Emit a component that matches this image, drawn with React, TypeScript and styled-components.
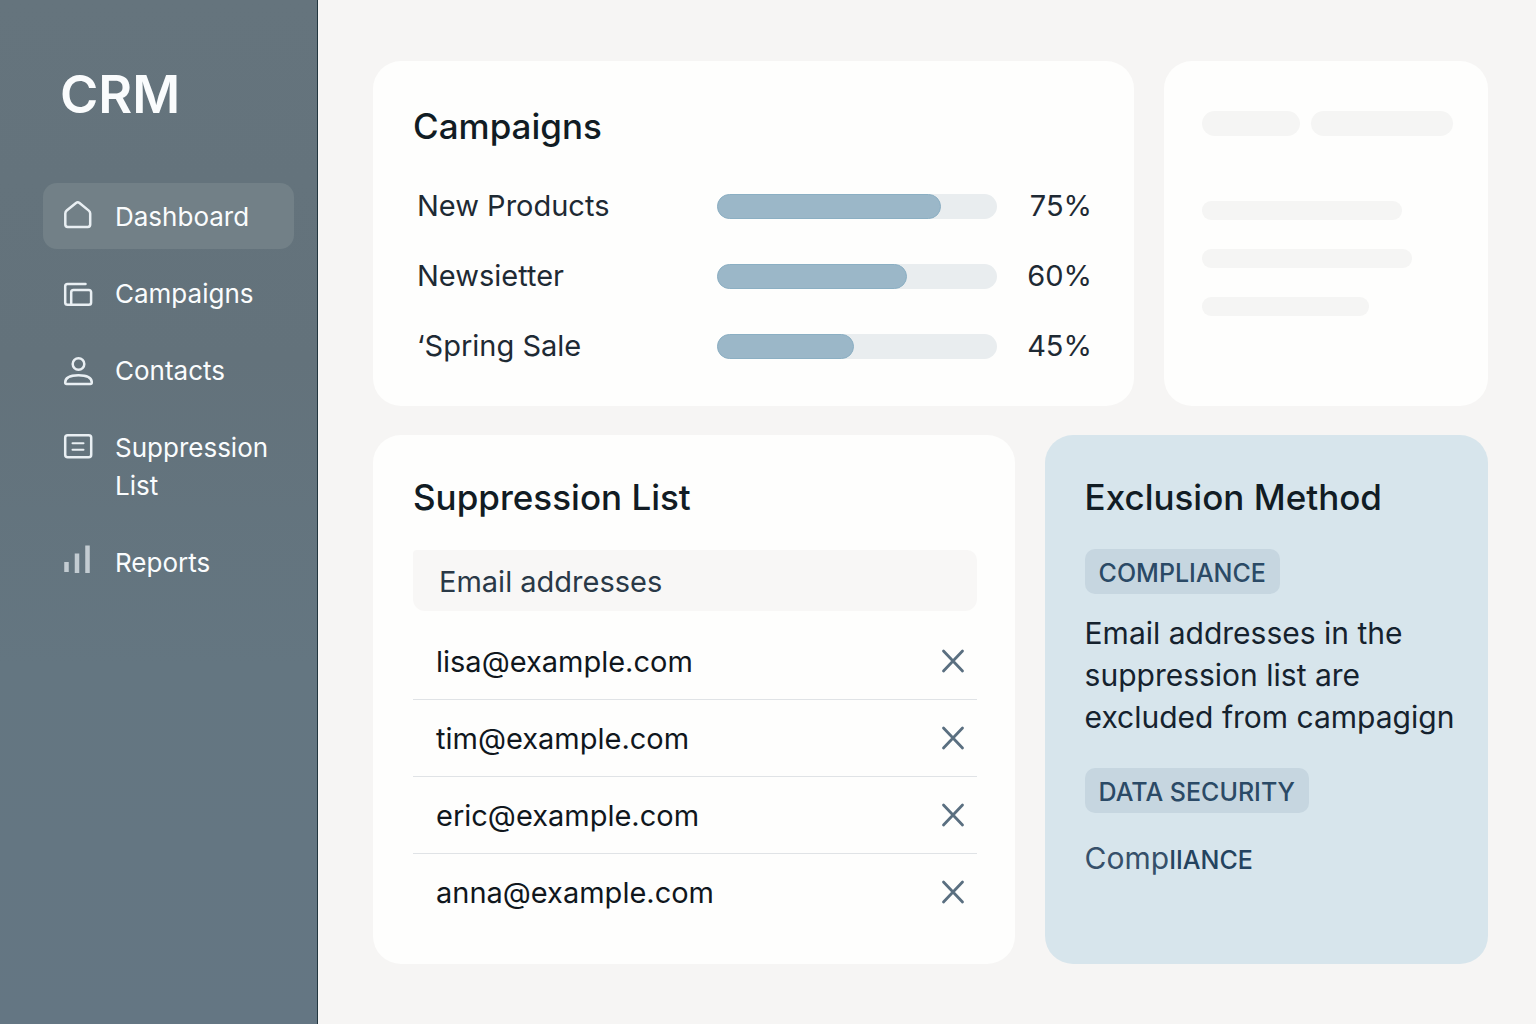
import React from "react";
import styled, { createGlobalStyle } from "styled-components";

const GlobalStyle = createGlobalStyle`
  *, *::before, *::after { box-sizing: border-box; }
  body {
    margin: 0;
    background: #f6f5f4;
    color: #15202a;
    font-family: Inter, "Liberation Sans", sans-serif;
  }
  h1, h2, p, ul { margin: 0; padding: 0; }
`;

const Page = styled.div`
  display: flex;
  min-height: 100vh;
`;

const Sidebar = styled.aside`
  flex: 0 0 318px;
  padding: 63px 23px 40px 43px;
  border-right: 1px solid #22363f;
  background: linear-gradient(180deg, #65747d 0%, #63727b 35%, #647681 65%, #647683 100%);
  color: #fafcfd;
`;

const Brand = styled.h1`
  padding-left: 17px;
  margin-bottom: 56px;
  font-size: 52px;
  font-weight: 600;
  line-height: 64px;
`;

const NavList = styled.ul`
  display: flex;
  flex-direction: column;
  gap: 11px;
  list-style: none;
`;

const NavLink = styled.a<{ $active?: boolean }>`
  display: flex;
  gap: 22px;
  padding: 15px 20px 13px;
  border-radius: 14px;
  background: ${(p) => (p.$active ? "#728087" : "transparent")};
  color: inherit;
  font-size: 26px;
  line-height: 38px;
  text-decoration: none;
`;

const NavIcon = styled.svg`
  flex: none;
  width: 30px;
  height: 38px;
  fill: none;
  stroke: #e9eff3;
  stroke-width: 2.5;
  stroke-linecap: round;
  stroke-linejoin: round;
`;

const Main = styled.main`
  flex: 1;
  display: flex;
  flex-direction: column;
  gap: 29px;
  min-width: 0;
  padding: 61px 48px 60px 55px;
`;

const Row = styled.div<{ $columns: string; $grow?: boolean }>`
  display: grid;
  grid-template-columns: ${(p) => p.$columns};
  gap: 30px;
  flex: ${(p) => (p.$grow ? "1 0 auto" : "none")};
`;

const Card = styled.section`
  min-width: 0;
  padding: 40px 38px 32px 40px;
  border-radius: 28px;
  background: #fefefd;
`;

const CampaignCard = styled(Card)`
  padding-top: 43px;
  padding-bottom: 40px;
`;

const SkeletonCard = styled(Card)`
  padding: 50px 34px 40px 38px;
`;

const PolicyCard = styled(Card)`
  padding-right: 30px;
  background: #d7e5ec;
`;

const CardTitle = styled.h2`
  color: #111c24;
  font-size: 35px;
  font-weight: 500;
  line-height: 44px;
`;

const CampaignList = styled.ul`
  display: grid;
  gap: 30px;
  margin-top: 38px;
  padding: 0 4px;
  list-style: none;
`;

const CampaignRow = styled.li`
  display: grid;
  grid-template-columns: 1fr 280px 95px;
  align-items: center;
  color: #1e2a34;
  font-size: 29px;
  line-height: 40px;
`;

const Percent = styled.span`
  text-align: right;
`;

const Track = styled.div`
  height: 25px;
  border-radius: 13px;
  background: #e9edef;
`;

const Fill = styled.div`
  height: 100%;
  border: 1px solid #8bafc3;
  border-radius: 13px;
  background: #9bb7c8;
`;

const Skeleton = styled.div`
  display: flex;
  flex-direction: column;
  gap: 29px;
`;

const SkeletonTop = styled.div`
  display: flex;
  gap: 11px;
  margin-bottom: 36px;
`;

const Bone = styled.div<{ $width: number; $tall?: boolean }>`
  width: ${(p) => p.$width}px;
  height: ${(p) => (p.$tall ? 25 : 19)}px;
  border-radius: ${(p) => (p.$tall ? 13 : 9)}px;
  background: #f5f5f4;
`;

const EmailTable = styled.table`
  width: 100%;
  margin-top: 31px;
  border-spacing: 0;
  font-size: 29px;
  line-height: 40px;

  tbody::before {
    content: "";
    display: block;
    height: 12px;
  }
`;

const HeadCell = styled.th`
  height: 61px;
  padding: 2px 26px 0;
  border-radius: 4px 10px 12px 12px;
  background: #f8f7f6;
  color: #2a3947;
  font-weight: 400;
  text-align: left;
`;

const Cell = styled.td<{ $last?: boolean; $action?: boolean }>`
  height: 77px;
  padding: ${(p) => (p.$action ? "4px 12px 0 0" : "2px 0 0 23px")};
  border-bottom: 1px solid ${(p) => (p.$last ? "transparent" : "#e0e3e6")};
  color: #10171d;
  text-align: ${(p) => (p.$action ? "right" : "left")};
`;

const RemoveButton = styled.button`
  padding: 0;
  border: 0;
  background: none;
  cursor: pointer;

  svg {
    display: block;
    width: 24px;
    height: 24px;
    stroke: #5a6f80;
    stroke-width: 2.8;
    stroke-linecap: round;
  }
`;

const Badge = styled.span`
  display: block;
  width: fit-content;
  padding: 4px 14px 1px;
  border-radius: 10px;
  background: #c6d6e0;
  color: #2b4a66;
  font-size: 25px;
  font-weight: 500;
  line-height: 40px;
`;

const Policy = styled.div`
  margin-top: 30px;
`;

const PolicyText = styled.p`
  margin-top: 18px;
  color: #15222e;
  font-size: 30px;
  line-height: 42px;
`;

const PolicyNote = styled.p`
  margin-top: 25px;
  color: #36506a;
  font-size: 30px;
  line-height: 40px;
`;

const NoteCaps = styled.span`
  color: #24435f;
  font-size: 25px;
  font-weight: 500;
`;

const icons = {
  home: (
    <path d="M2.300 15.600c0-1.300.4-2.200 1.400-3l9.300-7.600c1.300-1 2.200-1 3.500 0l9.300 7.600c1 .8 1.400 1.700 1.400 3v10.900c0 1.600-.8 2.400-2.400 2.400H4.700c-1.600 0-2.400-.8-2.400-2.400z" />
  ),
  campaigns: (
    <path d="M22.500 9H4.500C3 9 2.200 9.800 2.200 11.300v16.200c0 1.500.8 2.300 2.300 2.300h21.300c1.500 0 2.300-.8 2.300-2.300V17.300c0-1.500-.8-2.300-2.300-2.300H10.500C9 15 8.200 15.800 8.200 17.300v12.200" />
  ),
  contacts: (
    <>
      <circle cx="15.500" cy="12" r="5.800" />
      <path d="M2.200 30.500c0-4.400 4.600-7.300 13.300-7.300s13.300 2.900 13.300 7.300c0 1-.5 1.500-1.500 1.500H3.700c-1 0-1.500-.5-1.500-1.500z" />
    </>
  ),
  list: (
    <>
      <rect x="2.200" y="6.200" width="26" height="22" rx="2.500" />
      <path d="M9.500 14.200h11M9.500 20.800h11" strokeWidth="2" />
    </>
  ),
  reports: (
    <path
      d="M3.500 18v10M14 9.500v19.500M24.500 1.500v27.500"
      stroke="#c3ccd2"
      strokeWidth="4.500"
      strokeLinecap="butt"
    />
  ),
};

const navItems: { label: string; icon: keyof typeof icons; active?: boolean }[] = [
  { label: "Dashboard", icon: "home", active: true },
  { label: "Campaigns", icon: "campaigns" },
  { label: "Contacts", icon: "contacts" },
  { label: "Suppression List", icon: "list" },
  { label: "Reports", icon: "reports" },
];

const campaigns = [
  { name: "New Products", percent: 75, fill: 80 },
  { name: "Newsietter", percent: 60, fill: 68 },
  { name: "‘Spring Sale", percent: 45, fill: 49 },
];

const emails = ["lisa@example.com", "tim@example.com", "eric@example.com", "anna@example.com"];

export default function App() {
  return (
    <>
      <GlobalStyle />
      <Page>
        <Sidebar>
          <Brand>CRM</Brand>
          <nav aria-label="Main">
            <NavList>
              {navItems.map((item) => (
                <li key={item.label}>
                  <NavLink href="#" $active={item.active} aria-current={item.active ? "page" : undefined}>
                    <NavIcon viewBox="0 0 30 38" aria-hidden="true">
                      {icons[item.icon]}
                    </NavIcon>
                    <span>{item.label}</span>
                  </NavLink>
                </li>
              ))}
            </NavList>
          </nav>
        </Sidebar>
        <Main>
          <Row $columns="761fr 324fr">
            <CampaignCard>
              <CardTitle>Campaigns</CardTitle>
              <CampaignList>
                {campaigns.map((c) => (
                  <CampaignRow key={c.name}>
                    <span>{c.name}</span>
                    <Track role="progressbar" aria-label={c.name} aria-valuenow={c.percent}>
                      <Fill style={{ width: `${c.fill}%` }} />
                    </Track>
                    <Percent>{c.percent}%</Percent>
                  </CampaignRow>
                ))}
              </CampaignList>
            </CampaignCard>
            <SkeletonCard aria-hidden="true">
              <Skeleton>
                <SkeletonTop>
                  <Bone $width={98} $tall />
                  <Bone $width={142} $tall />
                </SkeletonTop>
                <Bone $width={200} />
                <Bone $width={210} />
                <Bone $width={167} />
              </Skeleton>
            </SkeletonCard>
          </Row>
          <Row $columns="641fr 443fr" $grow>
            <Card>
              <CardTitle>Suppression List</CardTitle>
              <EmailTable>
                <thead>
                  <tr>
                    <HeadCell colSpan={2}>Email addresses</HeadCell>
                  </tr>
                </thead>
                <tbody>
                  {emails.map((email, i) => (
                    <tr key={email}>
                      <Cell $last={i === emails.length - 1}>{email}</Cell>
                      <Cell $last={i === emails.length - 1} $action>
                        <RemoveButton type="button" aria-label={`Remove ${email}`}>
                          <svg viewBox="0 0 24 24" aria-hidden="true">
                            <path d="M2.500 2l19 20M21.500 2l-19 20" />
                          </svg>
                        </RemoveButton>
                      </Cell>
                    </tr>
                  ))}
                </tbody>
              </EmailTable>
            </Card>
            <PolicyCard>
              <CardTitle>Exclusion Method</CardTitle>
              <Policy>
                <Badge>COMPLIANCE</Badge>
                <PolicyText>Email addresses in the suppression list are excluded from campagign</PolicyText>
              </Policy>
              <Policy>
                <Badge>DATA SECURITY</Badge>
                <PolicyNote>
                  Comp<NoteCaps>IIANCE</NoteCaps>
                </PolicyNote>
              </Policy>
            </PolicyCard>
          </Row>
        </Main>
      </Page>
    </>
  );
}
